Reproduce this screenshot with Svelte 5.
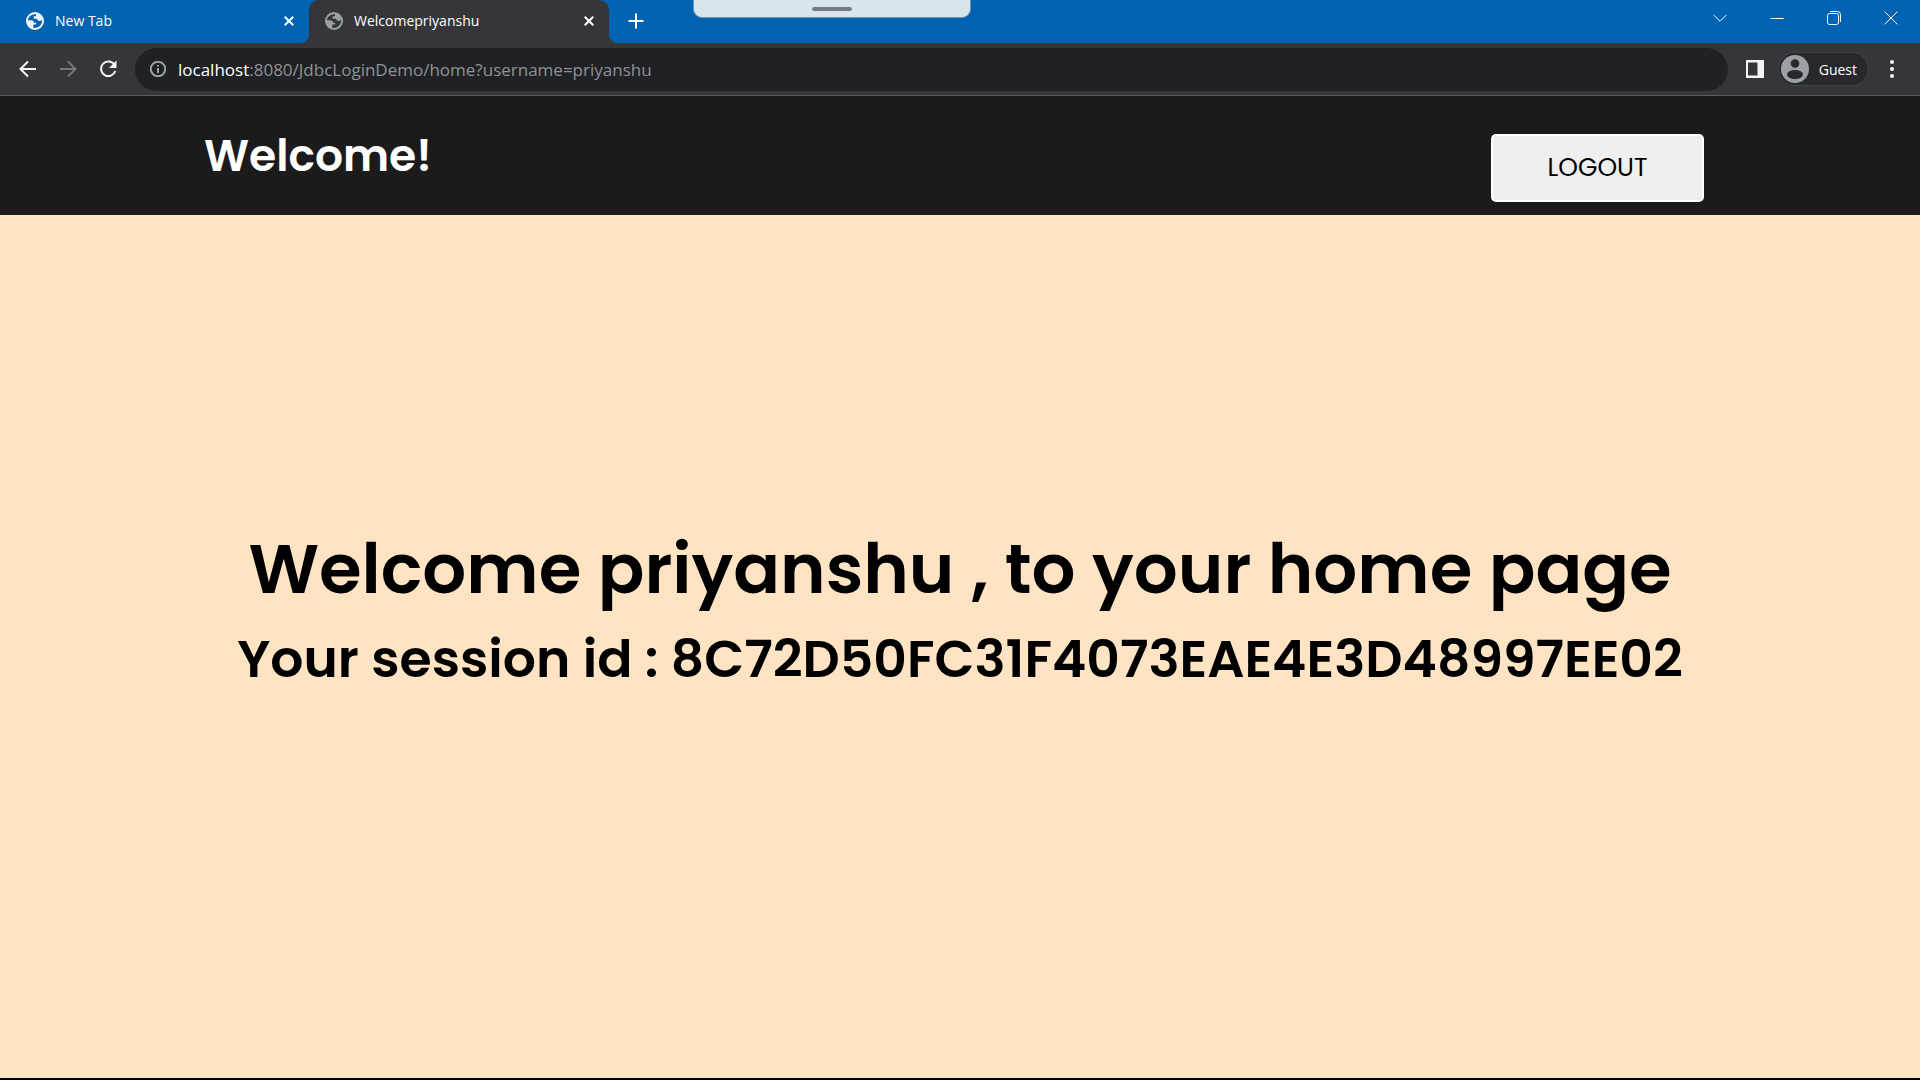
<script>
  const username = 'priyanshu';
  const sessionId = '8C72D50FC31F4073EAE4E3D48997EE02';
  const tabs = [
    { title: 'New Tab', active: false },
    { title: 'Welcome' + username, active: true }
  ];
</script>

<div class="window">
  <div class="handle"><span></span></div>

  <header class="strip">
    <nav class="tabs" aria-label="Tabs">
      {#each tabs as tab}
        <div class="tab" class:active={tab.active}>
          <svg class="globe" viewBox="0 0 18 18" aria-hidden="true">
            <circle class="disc" cx="9" cy="9" r="9" />
            <path class="land" d="M10 2.200C5.500 1.600 2 4.900 2 8.300h3.200c1.800 0 2.800.9 2.800 2.400h2.200v1.700H7.300v3.300c4.600 1 8.700-2.400 8.700-6.700 0-.5 0-.9-.1-1.300-.6.800-1.300 1.200-2.400 1.200-1.700 0-2.200-.9-2.400-2.100H7.700V4.300H10z" />
          </svg>
          <span class="title">{tab.title}</span>
          <button class="close" aria-label="Close {tab.title}">
            <svg viewBox="0 0 10 10"><path d="M.7.7l8.600 8.600M9.300.7L.7 9.300" /></svg>
          </button>
        </div>
      {/each}
      <button class="plus" aria-label="New tab">
        <svg viewBox="0 0 16 16"><path d="M8 .5v15M.5 8h15" /></svg>
      </button>
    </nav>
    <div class="controls">
      <button aria-label="Search tabs"><svg viewBox="0 0 14 14"><path d="M.7 4L7 10.300 13.300 4" /></svg></button>
      <button aria-label="Minimize"><svg viewBox="0 0 14 14"><path d="M.5 7.500h13" /></svg></button>
      <button aria-label="Restore"><svg viewBox="0 0 14 14"><rect x=".5" y="2.500" width="11" height="11" rx="2" /><path d="M3 .5h7.500a3 3 0 0 1 3 3V11" /></svg></button>
      <button aria-label="Close window"><svg viewBox="0 0 14 14"><path d="M.6.6l12.800 12.800M13.400.6L.6 13.400" /></svg></button>
    </div>
  </header>

  <div class="toolbar">
    <button class="tool" aria-label="Back">
      <svg viewBox="0 0 20 20"><path d="M18 10H3M10 2.500L2.500 10l7.500 7.500" /></svg>
    </button>
    <button class="tool dim" aria-label="Forward">
      <svg viewBox="0 0 20 20"><path d="M2 10h15M10 2.500l7.500 7.500-7.500 7.500" /></svg>
    </button>
    <button class="tool" aria-label="Reload">
      <svg viewBox="0 0 20 20"><path d="M16.300 5.500A7.300 7.300 0 1 0 17.300 12" /><path class="fill" d="M18.500 1.500v7.500H11z" /></svg>
    </button>
    <div class="address">
      <svg viewBox="0 0 16 16" aria-hidden="true"><circle cx="8" cy="8" r="7.200" /><path d="M8 7v5M8 4v1.600" /></svg>
      <a href="#home">localhost<span>:8080/JdbcLoginDemo/home?username={username}</span></a>
    </div>
    <button class="panel" aria-label="Side panel">
      <svg viewBox="0 0 18 18"><path fill-rule="evenodd" d="M0 0h18v18H0zM2 2.500v13h9.500v-13z" /></svg>
    </button>
    <button class="profile">
      <svg viewBox="0 0 28 28" aria-hidden="true">
        <circle class="face" cx="14" cy="14" r="14" />
        <circle cx="14" cy="8.500" r="4.300" />
        <ellipse cx="14" cy="19.500" rx="8" ry="4.500" />
      </svg>
      Guest
    </button>
    <button class="menu" aria-label="Menu">
      <svg viewBox="0 0 4 18"><circle cx="2" cy="2" r="2" /><circle cx="2" cy="9" r="2" /><circle cx="2" cy="16" r="2" /></svg>
    </button>
  </div>

  <div class="banner">
    <h2>Welcome!</h2>
    <button class="logout">LOGOUT</button>
  </div>

  <main>
    <h1>Welcome {username} , to your home page</h1>
    <p>Your session id : {sessionId}</p>
  </main>
</div>

<style>
  :global(body) {
    margin: 0;
  }

  .window {
    display: flex;
    flex-direction: column;
    min-height: 100vh;
    box-sizing: border-box;
    border-bottom: 2px solid #000;
    background: #ffe4c4;
    color: #000;
    font-family: 'Segoe UI', 'Open Sans', 'Noto Sans', sans-serif;
  }

  button {
    display: flex;
    align-items: center;
    justify-content: center;
    padding: 0;
    border: 0;
    background: none;
    color: #fff;
    font: inherit;
  }

  svg {
    display: block;
    flex: none;
    fill: none;
    stroke: none;
  }

  .handle {
    position: absolute;
    top: 0;
    left: 693px;
    display: flex;
    justify-content: center;
    width: 278px;
    height: 18px;
    box-sizing: border-box;
    border: 1px solid #6b97b8;
    border-top: 0;
    border-radius: 0 0 9px 9px;
    background: #dae5eb;
  }

  .handle span {
    width: 40px;
    height: 4px;
    margin-top: 7px;
    border-radius: 2px;
    background: #757d81;
  }

  .strip {
    display: flex;
    justify-content: space-between;
    height: 43px;
    background: #0063b1;
  }

  .tabs {
    display: flex;
    padding-left: 10px;
  }

  .tab {
    display: flex;
    align-items: center;
    width: 299px;
    height: 43px;
    padding: 0 15px 2px 16px;
    box-sizing: border-box;
    color: #fff;
    font-size: 14px;
  }

  .tab.active {
    position: relative;
    width: 300px;
    border-radius: 10px 10px 0 0;
    background: #35363a;
  }

  .tab.active::before,
  .tab.active::after {
    content: '';
    position: absolute;
    bottom: 0;
    width: 10px;
    height: 10px;
  }

  .tab.active::before {
    right: 100%;
    background: radial-gradient(circle at 0 0, transparent 10px, #35363a 11px);
  }

  .tab.active::after {
    left: 100%;
    background: radial-gradient(circle at 100% 0, transparent 10px, #35363a 11px);
  }

  .globe {
    width: 18px;
    height: 18px;
  }

  .globe .disc {
    fill: #f1f3f4;
  }

  .globe .land {
    fill: #0063b1;
  }

  .active .globe .disc {
    fill: #9aa0a6;
  }

  .active .globe .land {
    fill: #35363a;
  }

  .title {
    flex: 1;
    margin-left: 11px;
  }

  .close svg {
    width: 10px;
    height: 10px;
    stroke: #fff;
    stroke-width: 2;
  }

  .close {
    width: 10px;
    height: 20px;
  }

  .plus {
    margin: 0 0 1px 19px;
  }

  .plus svg {
    width: 16px;
    height: 16px;
    stroke: #fff;
    stroke-width: 2;
  }

  .controls {
    display: flex;
    padding-right: 1px;
  }

  .controls button {
    width: 57px;
    height: 36px;
  }

  .controls svg {
    width: 14px;
    height: 14px;
    stroke: #fff;
  }

  .toolbar {
    display: flex;
    align-items: center;
    height: 53px;
    padding: 0 26px 0 18px;
    box-sizing: border-box;
    border-bottom: 1px solid #5b5c60;
    background: #35363a;
  }

  .tool {
    width: 20px;
    margin-right: 20px;
  }

  .tool svg {
    width: 20px;
    height: 20px;
    stroke: #f1f3f4;
    stroke-width: 2;
  }

  .dim svg {
    stroke: #77787b;
  }

  .tool .fill {
    fill: #f1f3f4;
    stroke: none;
  }

  .address {
    display: flex;
    flex: 1;
    align-items: center;
    gap: 12px;
    height: 43px;
    margin-left: -3px;
    padding-left: 15px;
    border-radius: 22px;
    background: #202124;
  }

  .address svg {
    width: 16px;
    height: 16px;
    stroke: #9aa0a6;
    stroke-width: 2;
  }

  .address a {
    color: #fff;
    font-size: 17px;
    text-decoration: none;
  }

  .address span {
    color: #8f9296;
  }

  .panel {
    margin-left: 18px;
  }

  .panel svg {
    width: 18px;
    height: 18px;
    fill: #f1f3f4;
  }

  .profile {
    gap: 10px;
    height: 34px;
    margin-left: 14px;
    padding: 0 11px 0 2px;
    border: 1px solid #424347;
    border-radius: 17px;
    background: #27282b;
    font-size: 14px;
  }

  .profile svg {
    width: 28px;
    height: 28px;
    fill: #27282b;
  }

  .profile .face {
    fill: #9aa0a6;
  }

  .menu {
    margin-left: 21px;
  }

  .menu svg {
    width: 4px;
    height: 18px;
    fill: #f1f3f4;
  }

  .banner,
  main {
    font-family: Poppins, Inter, sans-serif;
  }

  .banner {
    display: flex;
    align-items: center;
    justify-content: space-between;
    height: 119px;
    padding: 0 216px 0 204px;
    background: #1b1b1b;
    color: #fff;
  }

  h2 {
    margin: 0;
    font-size: 44px;
    font-weight: 600;
    line-height: 60px;
  }

  .logout {
    width: 213px;
    height: 68px;
    margin-top: 24px;
    box-sizing: border-box;
    border: 2px solid #fff;
    border-radius: 5px;
    background: #efefef;
    color: #000;
    font-size: 25px;
    font-weight: 400;
  }

  main {
    display: flex;
    flex: 1;
    flex-direction: column;
    align-items: center;
    justify-content: center;
    padding-bottom: 66px;
    font-weight: 600;
    text-align: center;
  }

  h1 {
    margin: 0;
    font-size: 69px;
    font-weight: inherit;
    line-height: 90px;
  }

  p {
    margin: 0;
    font-size: 52px;
    line-height: 90px;
  }
</style>
